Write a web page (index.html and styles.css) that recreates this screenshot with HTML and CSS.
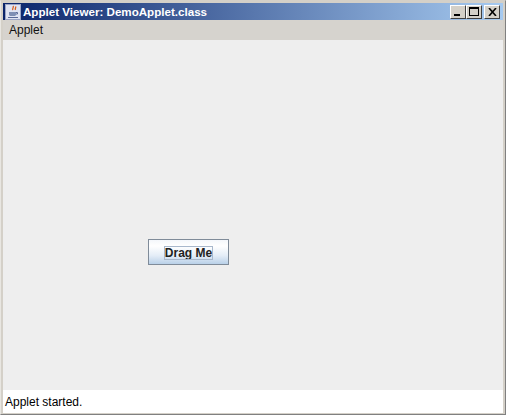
FILE: index.html
```html
<!DOCTYPE html>
<html lang="en">
<head>
    <meta charset="UTF-8">
    <title>Applet Viewer: DemoApplet.class</title>
    <link rel="stylesheet" href="styles.css">
</head>
<body>
    <div class="window">
        <div class="titlebar">
            <svg class="app-icon" width="16" height="16" viewBox="0 0 16 16">
                <rect x="0.5" y="0.5" width="15" height="15" fill="#dfe3f2" stroke="#9aa4c4"/>
                <path d="M8 2c1.500 1.500-1.500 2.500 0 4M10.500 2.500c1 1.200-1 2 0 3.500" fill="none" stroke="#d8601c" stroke-width="1.300"/>
                <path d="M4 8h7v2.500c0 1-1 1.500-2 1.500H6c-1 0-2-.5-2-1.500z" fill="#7f8fb4"/>
                <path d="M11 8.500h1.500v1.500H11" fill="none" stroke="#5a6a98"/>
                <path d="M3 13.500h10" stroke="#5a6a98"/>
            </svg>
            <span class="title">Applet Viewer: DemoApplet.class</span>
            <div class="win-buttons">
                <button class="win-btn"><span class="min-glyph"></span></button>
                <button class="win-btn"><span class="max-glyph"></span></button>
                <button class="win-btn close-btn">
                    <svg width="9" height="8" viewBox="0 0 9 8"><path d="M1 0l7 8M8 0l-7 8" stroke="#000" stroke-width="1.600" fill="none"/></svg>
                </button>
            </div>
        </div>
        <div class="menubar"><span class="menu-item">Applet</span></div>
        <div class="applet">
            <button class="drag-btn"><span class="drag-label">Drag Me</span></button>
        </div>
        <div class="status">Applet started.</div>
    </div>
</body>
</html>
```

FILE: styles.css
```css
body {
    margin: 0;
    padding: 0;
    background-color: #d4d0c8;
    font-family: "Liberation Sans", Arial, sans-serif;
}

.window {
    display: flex;
    flex-direction: column;
    box-sizing: border-box;
    width: 506px;
    height: 415px;
    padding: 2px 2px 1px 2px;
    background-color: #d4d0c8;
    border-top: 1px solid #d4d0c8;
    border-left: 1px solid #e8e6e1;
    border-right: 1px solid #808080;
    border-bottom: 1px solid #808080;
}

.titlebar {
    display: flex;
    align-items: center;
    height: 17px;
    flex-shrink: 0;
    padding-left: 2px;
    background: linear-gradient(to right, #0a246a, #a6caf0);
}

.app-icon {
    flex-shrink: 0;
}

.title {
    margin-left: 2px;
    color: #fff;
    font-size: 11.6px;
    font-weight: bold;
}

.win-buttons {
    display: flex;
    margin-left: auto;
    margin-right: 3px;
}

.win-btn {
    display: flex;
    align-items: center;
    justify-content: center;
    box-sizing: border-box;
    width: 16px;
    height: 14px;
    padding: 0;
    background-color: #d4d0c8;
    border: 1px solid;
    border-color: #fff #404040 #404040 #fff;
}

.close-btn {
    margin-left: 2px;
}

.min-glyph {
    align-self: flex-end;
    width: 6px;
    height: 2px;
    margin: 0 3px 2px 0;
    background-color: #000;
}

.max-glyph {
    box-sizing: border-box;
    width: 10px;
    height: 9px;
    border: 1px solid #000;
    border-top-width: 2px;
}

.menubar {
    height: 20px;
    flex-shrink: 0;
    display: flex;
    align-items: center;
    padding-left: 6px;
    background-color: #d6d3ce;
}

.menu-item {
    color: #111;
    font-size: 12px;
}

.applet {
    flex: 1;
    padding: 199px 0 0 145px;
    background-color: #eeeeee;
}

.drag-btn {
    display: flex;
    align-items: center;
    justify-content: center;
    box-sizing: border-box;
    width: 81px;
    height: 26px;
    padding: 1px 0 0;
    background: linear-gradient(to bottom, #f4f7fb, #fff 25%, #e4edf7 65%, #b9d0e8);
    border: 1px solid #7f8b99;
}

.drag-label {
    padding: 0 1px;
    outline: 1px solid #a8b8cc;
    outline-offset: -1px;
    color: #222;
    font-family: "Liberation Sans", Arial, sans-serif;
    font-size: 12px;
    font-weight: bold;
    line-height: 14px;
}

.status {
    height: 22px;
    flex-shrink: 0;
    display: flex;
    align-items: center;
    padding: 1px 0 0 2px;
    background-color: #fff;
    color: #000;
    font-size: 12px;
}
```
